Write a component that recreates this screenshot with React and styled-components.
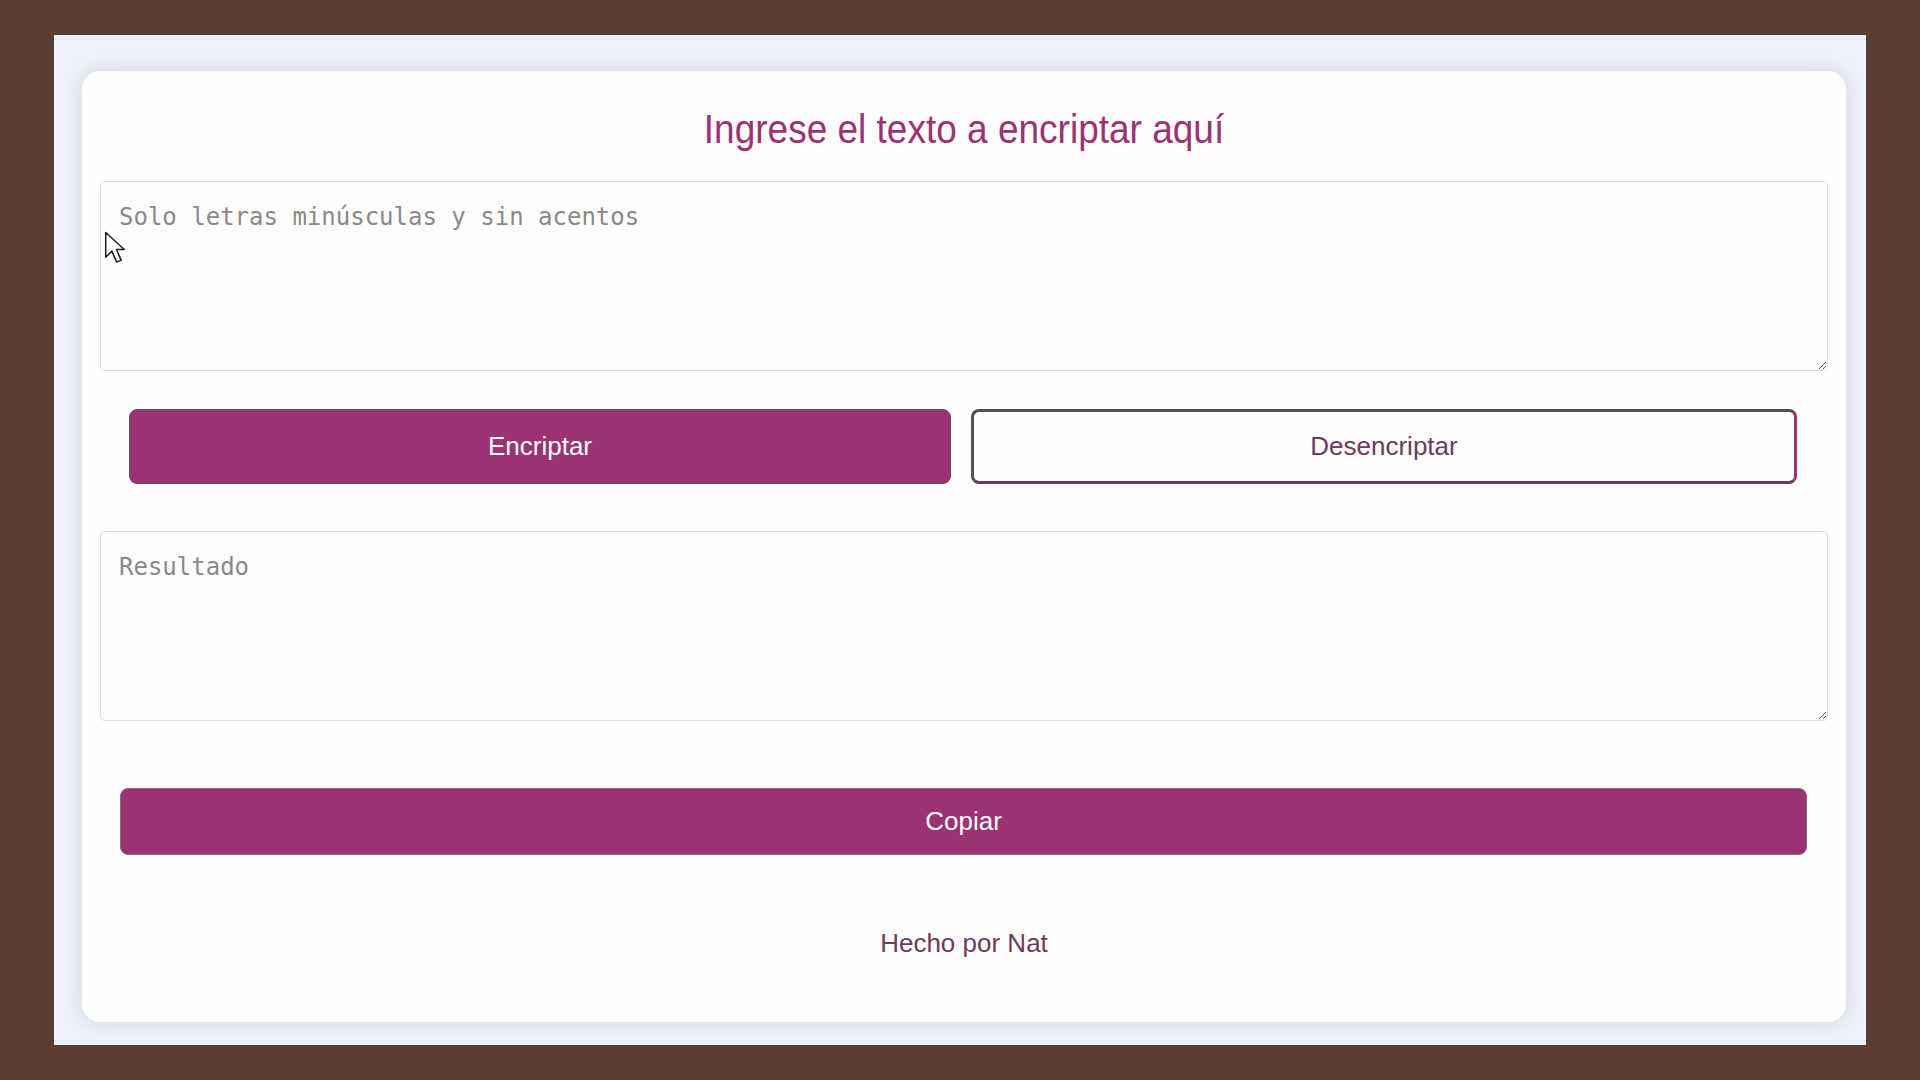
import React from "react";
import styled, { createGlobalStyle } from "styled-components";

const GlobalStyle = createGlobalStyle`
  html, body {
    margin: 0;
    padding: 0;
    background-color: #5a3d30;
  }
  #root {
    padding: 35px 54px;
  }
`;

const App = () => {
  return (
    <>
      <GlobalStyle />
      <Page>
        <Card>
          <Title>Ingrese el texto a encriptar aquí</Title>
          <TextBox placeholder="Solo letras minúsculas y sin acentos" />
          <Actions>
            <Button>Encriptar</Button>
            <Button $outline>Desencriptar</Button>
          </Actions>
          <TextBox $result placeholder="Resultado" />
          <CopyButton>Copiar</CopyButton>
          <Footer>Hecho por Nat</Footer>
          <Cursor viewBox="0 0 14 22" aria-hidden="true">
            <path
              d="M1 1 L1 17 L5 13 L8 20 L11 19 L8 12 L13 12 Z"
              fill="#fff"
              stroke="#222"
              strokeWidth="1"
              strokeLinejoin="round"
            />
          </Cursor>
        </Card>
      </Page>
    </>
  );
};

const Page = styled.div`
  height: 1010px;
  box-sizing: border-box;
  background-color: #eef1f9;
  padding: 36px 20px 23px 28px;
`;

const Card = styled.div`
  position: relative;
  height: 100%;
  box-sizing: border-box;
  background-color: #fdfdfd;
  border-radius: 18px;
  box-shadow: 0 0 18px rgba(40, 50, 90, 0.13);
  padding: 37px 18px 0;
  display: flex;
  flex-direction: column;
  font-family: "Liberation Sans", Arial, sans-serif;
`;

const Title = styled.h1`
  margin: 0 0 30px;
  font-size: 37px;
  font-weight: 400;
  line-height: 43px;
  text-align: center;
  color: #9b3272;
  transform: scaleY(1.1);
`;

const TextBox = styled.textarea`
  display: block;
  height: 190px;
  box-sizing: border-box;
  width: 100%;
  margin: ${(p) => (p.$result ? "47px 0 0" : "0")};
  padding: 21px 18px;
  border: 1px solid #dedcdc;
  border-radius: 5px;
  background-color: #fdfdfd;
  font-family: "DejaVu Sans Mono", "Liberation Mono", monospace;
  font-size: 24px;
  color: #444;
  resize: vertical;
  outline: none;

  &::placeholder {
    color: #8c8888;
  }
`;

const Actions = styled.div`
  display: flex;
  gap: 20px;
  margin: 38px 31px 0 29px;
`;

const Button = styled.button`
  flex: 1;
  height: 75px;
  border-radius: 8px;
  font-family: "Liberation Sans", Arial, sans-serif;
  font-size: 26px;
  cursor: pointer;
  border: ${(p) => (p.$outline ? "3px solid" : "1px solid")};
  border-color: ${(p) =>
    p.$outline ? "#5b4b57 #9b3272 #6e3a5e #5b4b57" : "#6e5066"};
  background-color: ${(p) => (p.$outline ? "#fdfdfd" : "#9b3272")};
  color: ${(p) => (p.$outline ? "#6e3a5f" : "#ffffff")};
`;

const CopyButton = styled.button`
  height: 67px;
  margin: 67px 21px 0 20px;
  border: 1px solid #8a6a80;
  border-radius: 8px;
  background-color: #9b3272;
  color: #ffffff;
  font-family: "Liberation Sans", Arial, sans-serif;
  font-size: 26px;
  cursor: pointer;
`;

const Footer = styled.p`
  margin: 73px 0 0;
  font-size: 26px;
  line-height: 30px;
  text-align: center;
  color: #6e3a5f;
`;

const Cursor = styled.svg`
  position: absolute;
  left: 22px;
  top: 160px;
  width: 22px;
  height: 34px;
  pointer-events: none;
`;

export default App;
